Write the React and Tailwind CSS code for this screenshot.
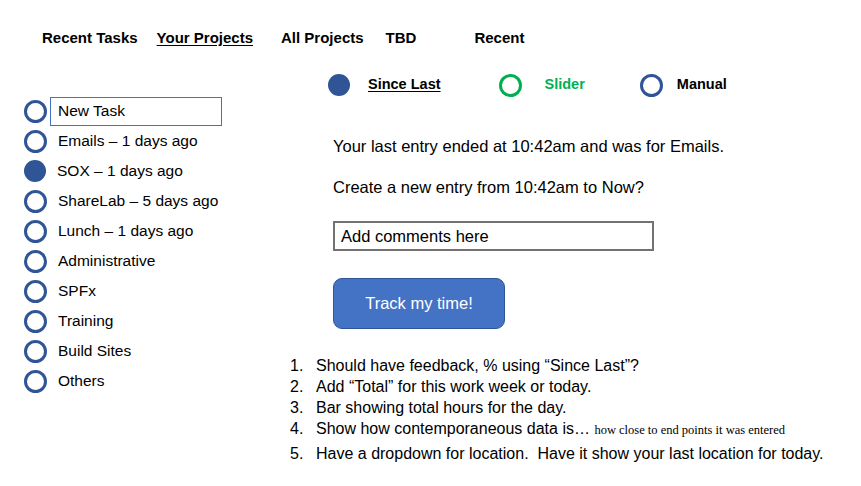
import React from "react";

const projects = [
  { label: "Emails – 1 days ago" },
  { label: "SOX – 1 days ago", on: true },
  { label: "ShareLab – 5 days ago" },
  { label: "Lunch – 1 days ago" },
  { label: "Administrative" },
  { label: "SPFx" },
  { label: "Training" },
  { label: "Build Sites" },
  { label: "Others" },
];

const notes = [
  "Should have feedback, % using “Since Last”?",
  "Add “Total” for this work week or today.",
  "Bar showing total hours for the day.",
  null,
  "Have a dropdown for location.  Have it show your last location for today.",
];

function Dot({ on, green }) {
  if (on) return <span className="block w-[22px] h-[22px] rounded-full bg-[#2F5597] shrink-0" />;
  return (
    <span
      className={
        "block w-[23px] h-[23px] rounded-full border-[3px] shrink-0 " +
        (green ? "border-[#00B050]" : "border-[#2F5597]")
      }
    />
  );
}

export default function App() {
  return (
    <div className="w-[861px] h-[486px] bg-white text-black font-['Liberation_Sans',Arial,sans-serif] overflow-hidden">
      {/* tabs */}
      <div className="flex items-center h-[20px] mt-[28px] text-[15px] font-bold">
        <span className="ml-[42px]">Recent Tasks</span>
        <span className="ml-[19px] underline underline-offset-2">Your Projects</span>
        <span className="ml-[28px]">All Projects</span>
        <span className="ml-[22px]">TBD</span>
        <span className="ml-[58px]">Recent</span>
      </div>

      <div className="flex mt-[25px]">
        {/* project list */}
        <div className="w-[290px] shrink-0 pl-[24px] pt-[23px] text-[15.5px]">
          <div className="flex items-center h-[30px]">
            <Dot />
            <div className="ml-[3px] w-[172px] h-[29px] border border-[#4472C4] flex items-center pl-[7px]">New Task</div>
          </div>
          {projects.map((p) => (
            <div key={p.label} className="flex items-center h-[30px]">
              <Dot on={p.on} />
              <span className="ml-[11px]">{p.label}</span>
            </div>
          ))}
        </div>

        {/* entry panel */}
        <div className="flex-1">
          <div className="flex items-center h-[24px] text-[14.5px] font-bold">
            <span className="ml-[38px]"><Dot on /></span>
            <span className="ml-[18px] underline underline-offset-2">Since Last</span>
            <span className="ml-[58px]"><Dot green /></span>
            <span className="ml-[23px] text-[#00B050]">Slider</span>
            <span className="ml-[55px]"><Dot /></span>
            <span className="ml-[14px]">Manual</span>
          </div>

          <div className="ml-[43px] text-[16.5px]">
            <p className="mt-[39px] leading-[20px]">Your last entry ended at 10:42am and was for Emails.</p>
            <p className="mt-[21px] leading-[20px]">Create a new entry from 10:42am to Now?</p>
            <div className="mt-[24px] w-[321px] h-[30px] border-2 border-[#767171] flex items-center pl-[6px]">
              Add comments here
            </div>
            <button className="mt-[27px] w-[172px] h-[51px] rounded-[9px] bg-[#4472C4] border border-[#2F5597] text-white text-[16.5px]">
              Track my time!
            </button>
          </div>

          <ol className="mt-[26px] text-[16px] leading-[21px]">
            {notes.map((n, i) => (
              <li key={i} className={"flex whitespace-pre " + (i === 4 ? "mt-[2px]" : "")}>
                <span className="w-[26px]">{i + 1}.</span>
                {n ? (
                  <span>{n}</span>
                ) : (
                  <span>
                    Show how contemporaneous data is…{" "}
                    <span className="font-['Liberation_Serif',serif] text-[12.5px]">how close to end points it was entered</span>
                  </span>
                )}
              </li>
            ))}
          </ol>
        </div>
      </div>
    </div>
  );
}
